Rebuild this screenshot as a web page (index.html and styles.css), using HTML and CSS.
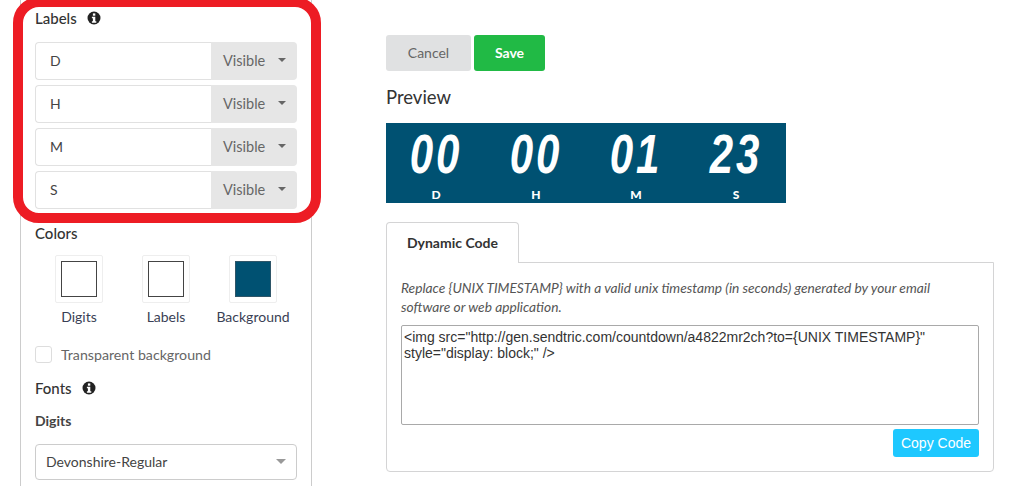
FILE: index.html
```html
<!DOCTYPE html>
<html lang="en">
<head>
  <meta charset="UTF-8" />
  <title>Countdown timer</title>
  <link rel="stylesheet" href="styles.css">
</head>
<body>
  <div class="page">
    <aside class="sidebar">
      <h3 class="section-title">Labels
        <svg class="info" viewBox="0 0 14 14"><circle cx="7" cy="7" r="6.5" fill="#222"/><rect x="5.9" y="2.4" width="2.4" height="2.3" fill="#fff"/><path d="M4.9 5.8h3.4v4.4h1v1.5H4.9v-1.5h1V7.3h-1z" fill="#fff"/></svg>
      </h3>
      <div class="label-rows">
        <div class="label-row"><span class="label-input">D</span><span class="label-select">Visible<i class="caret"></i></span></div>
        <div class="label-row"><span class="label-input">H</span><span class="label-select">Visible<i class="caret"></i></span></div>
        <div class="label-row"><span class="label-input">M</span><span class="label-select">Visible<i class="caret"></i></span></div>
        <div class="label-row"><span class="label-input">S</span><span class="label-select">Visible<i class="caret"></i></span></div>
      </div>

      <h3 class="section-title colors-title">Colors</h3>
      <div class="swatches">
        <div class="swatch"><div class="swatch-box"><div class="swatch-fill"></div></div><span>Digits</span></div>
        <div class="swatch"><div class="swatch-box"><div class="swatch-fill"></div></div><span>Labels</span></div>
        <div class="swatch"><div class="swatch-box"><div class="swatch-fill dark"></div></div><span>Background</span></div>
      </div>

      <div class="check-row"><span class="checkbox"></span>Transparent background</div>

      <h3 class="section-title fonts-title">Fonts
        <svg class="info" viewBox="0 0 14 14"><circle cx="7" cy="7" r="6.5" fill="#222"/><rect x="5.9" y="2.4" width="2.4" height="2.3" fill="#fff"/><path d="M4.9 5.8h3.4v4.4h1v1.5H4.9v-1.5h1V7.3h-1z" fill="#fff"/></svg>
      </h3>
      <h4 class="sub-title">Digits</h4>
      <div class="font-select"><span>Devonshire-Regular</span><i class="caret big"></i></div>
    </aside>

    <main class="main">
      <div class="actions">
        <button class="btn btn-cancel">Cancel</button>
        <button class="btn btn-save">Save</button>
      </div>
      <h2 class="preview-title">Preview</h2>
      <div class="banner">
        <div class="unit"><span class="digits">00</span><span class="unit-label">D</span></div>
        <div class="unit"><span class="digits">00</span><span class="unit-label">H</span></div>
        <div class="unit"><span class="digits">01</span><span class="unit-label">M</span></div>
        <div class="unit"><span class="digits">23</span><span class="unit-label">S</span></div>
      </div>

      <div class="tab">Dynamic Code</div>
      <div class="tab-panel">
        <p class="hint">Replace {UNIX TIMESTAMP} with a valid unix timestamp (in seconds) generated by your email software or web application.</p>
        <div class="code-box">&lt;img src="http://gen.sendtric.com/countdown/a4822mr2ch?to={UNIX TIMESTAMP}" style="display: block;" /&gt;</div>
        <div class="copy-row"><button class="btn-copy">Copy Code</button></div>
      </div>
    </main>
  </div>

  <!-- red highlight over the labels block -->
  <div class="highlight"></div>
</body>
</html>
```

FILE: styles.css
```css
html, body {
  margin: 0;
  height: 486px;
  overflow: hidden;
  background: #fff;
}
body {
  font-family: 'Lato', sans-serif;
  color: #333;
  position: relative;
}
.page {
  display: flex;
  align-items: flex-start;
  height: 486px;
  overflow: hidden;
  padding-left: 20px;
}

/* Left column */
.sidebar {
  box-sizing: border-box;
  width: 292px;
  height: 486px;
  flex: none;
  padding: 9px 14px 0;
  border: 1px solid #ccc;
  border-width: 0 1px;
}
.section-title {
  margin: 0;
  font-size: 15px;
  line-height: 18px;
  font-weight: 500;
  color: #333;
  display: flex;
  align-items: center;
  gap: 10px;
}
.info {
  width: 14px;
  height: 14px;
}
.label-rows {
  margin-top: 15px;
  display: flex;
  flex-direction: column;
  gap: 5px;
}
.label-row {
  display: flex;
  height: 38px;
}
.label-input {
  box-sizing: border-box;
  width: 176px;
  padding-left: 14px;
  border: 1px solid #e1e1e1;
  border-right: none;
  border-radius: 4px 0 0 4px;
  font-size: 14px;
  line-height: 35px;
  color: #444;
}
.label-select {
  width: 86px;
  padding: 0 11px 2px 12px;
  box-sizing: border-box;
  background: #e6e6e6;
  border-radius: 0 4px 4px 0;
  font-size: 14.5px;
  color: #666;
  display: flex;
  align-items: center;
  justify-content: space-between;
}
.caret {
  width: 0;
  height: 0;
  border: 4px solid transparent;
  border-top: 4px solid #666;
  border-bottom: none;
}
.caret.big {
  border-width: 5px 5px 0;
  border-top-color: #999;
  border-bottom: none;
}
.colors-title {
  margin-top: 15px;
}
.swatches {
  margin-top: 13px;
  display: flex;
  padding-left: 20px;
  gap: 39px;
}
.swatch {
  width: 48px;
  display: flex;
  flex-direction: column;
  align-items: center;
  font-size: 14px;
  color: #3a3f55;
}
.swatch span {
  margin-top: 5px;
  line-height: 18px;
  white-space: nowrap;
}
.swatch-box {
  box-sizing: border-box;
  width: 48px;
  height: 48px;
  padding: 5px;
  border: 1px solid #eee;
  border-radius: 2px;
}
.swatch-fill {
  box-sizing: border-box;
  width: 36px;
  height: 36px;
  border: 1px solid #444;
  background: #fff;
}
.swatch-fill.dark {
  background: #005172;
  border-color: #2e5568;
}
.check-row {
  margin-top: 20px;
  display: flex;
  align-items: center;
  gap: 9px;
  font-size: 14.2px;
  line-height: 17px;
  color: #666;
}
.checkbox {
  box-sizing: border-box;
  width: 17px;
  height: 17px;
  border: 1px solid #ddd;
  border-radius: 3px;
}
.fonts-title {
  margin-top: 16px;
  gap: 10px;
}
.sub-title {
  margin: 15px 0 0;
  font-size: 14px;
  line-height: 18px;
  font-weight: 700;
  color: #444;
}
.font-select {
  box-sizing: border-box;
  margin-top: 14px;
  height: 36px;
  padding: 0 10px 2px;
  border: 1px solid #ccc;
  border-radius: 4px;
  font-size: 14px;
  color: #444;
  display: flex;
  align-items: center;
  justify-content: space-between;
}

/* Right column */
.main {
  width: 608px;
  margin-left: 74px;
  padding-top: 35px;
}
.actions {
  display: flex;
  gap: 3px;
}
.btn {
  height: 36px;
  border: none;
  border-radius: 3px;
  font-family: inherit;
  font-size: 14px;
  padding: 0 0 2px;
}
.btn-cancel {
  width: 85px;
  background: #e0e1e2;
  color: #666;
}
.btn-save {
  width: 71px;
  background: #21ba45;
  color: #fff;
  font-weight: 700;
}
.preview-title {
  margin: 15px 0 0;
  font-size: 18.5px;
  line-height: 22px;
  font-weight: 400;
  color: #333;
}
.banner {
  margin-top: 15px;
  width: 400px;
  height: 80px;
  background: #005172;
  display: flex;
}
.unit {
  width: 100px;
  display: flex;
  flex-direction: column;
  align-items: center;
  color: #fff;
}
.digits {
  margin-top: 4px;
  font-family: 'Liberation Sans', sans-serif;
  font-style: italic;
  font-weight: 700;
  font-size: 42px;
  line-height: 56px;
  letter-spacing: 3px;
  transform: scaleY(1.3);
}
.unit-label {
  margin-top: 5px;
  font-size: 12px;
  line-height: 14px;
  font-weight: 900;
}
.tab {
  box-sizing: border-box;
  position: relative;
  z-index: 1;
  margin-top: 19px;
  width: 133px;
  height: 41px;
  padding-left: 20px;
  background: #fff;
  border: 1px solid #d4d4d5;
  border-bottom: none;
  border-radius: 4px 4px 0 0;
  font-size: 14px;
  font-weight: 700;
  line-height: 40px;
  color: #333;
}
.tab-panel {
  box-sizing: border-box;
  margin-top: -1px;
  height: 210px;
  padding: 15px 14px 0;
  border: 1px solid #d4d4d5;
  border-radius: 0 0 4px 4px;
}
.hint {
  margin: 0;
  width: 540px;
  font-size: 13.75px;
  line-height: 19px;
  font-style: italic;
  color: #555;
}
.code-box {
  box-sizing: border-box;
  margin-top: 9px;
  height: 100px;
  padding: 3px 2px;
  border: 1px solid #a9a9a9;
  border-radius: 2px;
  font-family: 'Liberation Sans', sans-serif;
  font-size: 14px;
  line-height: 16px;
  color: #333;
}
.copy-row {
  margin-top: 4px;
  display: flex;
  justify-content: flex-end;
}
.btn-copy {
  width: 86px;
  height: 28px;
  padding: 0;
  border: none;
  border-radius: 3px;
  background: #1ec8ff;
  color: #fff;
  font-family: 'Liberation Sans', sans-serif;
  font-size: 14px;
}

/* Annotation on top of the screenshot */
.highlight {
  position: absolute;
  left: 13px;
  top: -3px;
  width: 288px;
  height: 206px;
  border: 10px solid #ed1c24;
  border-radius: 26px;
}
```
